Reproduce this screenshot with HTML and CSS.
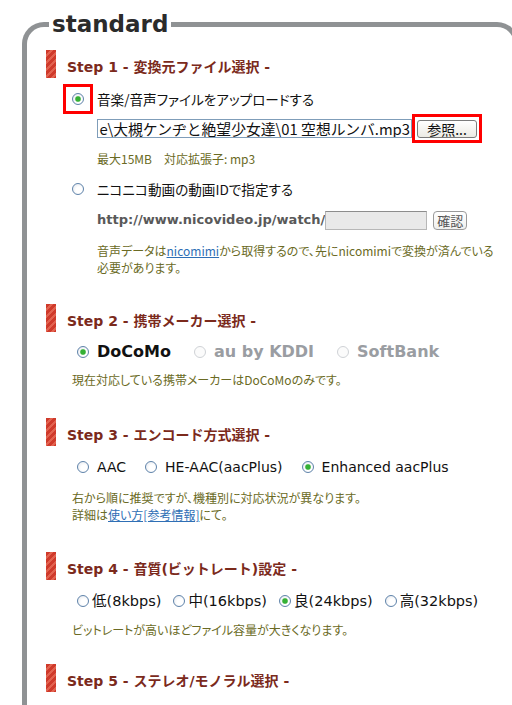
FILE: index.html
```html
<!DOCTYPE html>
<html lang="ja">
<head>
<meta charset="utf-8">
<title>standard</title>
<link rel="stylesheet" href="styles.css">
</head>
<body>
<fieldset class="frame">
  <legend class="frame-title">standard</legend>

  <section class="step step-1">
    <h2 class="step-title"><span class="step-text">Step 1 - 変換元ファイル選択 -</span></h2>
    <div class="row opt-upload">
      <span class="hl-box"><input class="radio" type="radio" name="src" checked></span>
      <label class="opt-label jp">音楽/音声ファイルをアップロードする</label>
    </div>
    <div class="row file-row">
      <div class="file-path"><span>e\大槻ケンヂと絶望少女達\01 空想ルンバ.mp3</span></div>
      <span class="hl-btn"><button class="browse-btn" type="button">参照...</button></span>
    </div>
    <p class="note sub-note">最大15MB　対応拡張子: mp3</p>
    <div class="row opt-nico">
      <input class="radio" type="radio" name="src">
      <label class="opt-label jp">ニコニコ動画の動画IDで指定する</label>
    </div>
    <div class="row url-row">
      <span class="url">http://www.nicovideo.jp/watch/</span>
      <span class="id-box"></span>
      <button class="confirm-btn" type="button">確認</button>
    </div>
    <p class="note sub-note nico-note">音声データは<a href="#">nicomimi</a>から取得するので、先にnicomimiで変換が済んでいる<br>必要があります。</p>
  </section>

  <section class="step step-2">
    <h2 class="step-title"><span class="step-text">Step 2 - 携帯メーカー選択 -</span></h2>
    <div class="row carriers">
      <input class="radio" type="radio" name="carrier" checked>
      <label class="carrier">DoCoMo</label>
      <input class="radio" type="radio" name="carrier" disabled>
      <label class="carrier off">au by KDDI</label>
      <input class="radio" type="radio" name="carrier" disabled>
      <label class="carrier off">SoftBank</label>
    </div>
    <p class="note">現在対応している携帯メーカーはDoCoMoのみです。</p>
  </section>

  <section class="step step-3">
    <h2 class="step-title"><span class="step-text">Step 3 - エンコード方式選択 -</span></h2>
    <div class="row codecs">
      <input class="radio" type="radio" name="codec">
      <label class="codec">AAC</label>
      <input class="radio" type="radio" name="codec">
      <label class="codec">HE-AAC(aacPlus)</label>
      <input class="radio" type="radio" name="codec" checked>
      <label class="codec">Enhanced aacPlus</label>
    </div>
    <p class="note">右から順に推奨ですが、機種別に対応状況が異なります。<br>詳細は<a href="#">使い方[参考情報]</a>にて。</p>
  </section>

  <section class="step step-4">
    <h2 class="step-title"><span class="step-text">Step 4 - 音質(ビットレート)設定 -</span></h2>
    <div class="row rates">
      <input class="radio" type="radio" name="rate">
      <label class="rate">低(8kbps)</label>
      <input class="radio" type="radio" name="rate">
      <label class="rate">中(16kbps)</label>
      <input class="radio" type="radio" name="rate" checked>
      <label class="rate">良(24kbps)</label>
      <input class="radio" type="radio" name="rate">
      <label class="rate">高(32kbps)</label>
    </div>
    <p class="note">ビットレートが高いほどファイル容量が大きくなります。</p>
  </section>

  <section class="step step-5">
    <h2 class="step-title"><span class="step-text">Step 5 - ステレオ/モノラル選択 -</span></h2>
  </section>
</fieldset>
</body>
</html>
```

FILE: styles.css
```css
html, body {
  margin: 0;
  padding: 0;
  background: #ffffff;
  overflow: hidden;
}

body {
  font-family: "DejaVu Sans", "Noto Sans CJK JP", sans-serif;
  color: #111;
}

.frame {
  margin: 10px 0 0 22px;
  padding: 0 0 60px 0;
  width: 497px;
  min-width: 0;
  min-height: 760px;
  box-sizing: border-box;
  border: 5px solid #8f9294;
  border-bottom: none;
  border-radius: 22px 22px 0 0;
}

.frame-title {
  margin-left: 22px;
  padding: 0 3px;
  font: bold 23px/29px "DejaVu Sans", sans-serif;
  color: #2b2b2b;
}

.step {
  padding-left: 19px;
}

.step-title {
  display: flex;
  align-items: center;
  height: 28px;
  margin: 0;
  font: bold 14px/18px "DejaVu Sans", "Noto Sans CJK JP", sans-serif;
  color: #7b2a1c;
}

.step-title::before {
  content: "";
  flex: none;
  width: 10px;
  height: 28px;
  margin-right: 11px;
  background: repeating-linear-gradient(135deg, #cf3a2b 0 3px, #e2624f 3px 5px);
}

.step-text {
  padding-top: 6px;
}

.step-1 { margin-top: 11px; }
.step-2 { margin-top: 28px; }
.step-3 { margin-top: 30px; }
.step-4 { margin-top: 29px; }
.step-5 { margin-top: 26px; }

.row {
  display: flex;
  align-items: center;
}

/* radio buttons, XP style */
.radio {
  appearance: none;
  -webkit-appearance: none;
  flex: none;
  width: 12px;
  height: 12px;
  margin: 0;
  border: 1px solid #5f83aa;
  border-radius: 50%;
  box-sizing: border-box;
  background: radial-gradient(circle at 60% 60%, #ffffff 0 35%, #dfe3ea 100%);
}

.radio:checked {
  background:
    radial-gradient(circle, #35b035 0 2.2px, #8fd48f 2.8px, transparent 3.4px),
    radial-gradient(circle at 60% 60%, #ffffff 0 35%, #dfe3ea 100%);
}

.radio:disabled {
  border-color: #cfd2d6;
  background: #fbfbfb;
}

/* step 1 */
.opt-upload {
  margin-top: 6px;
  height: 30px;
  padding-left: 17px;
}

.hl-box {
  display: flex;
  align-items: center;
  justify-content: center;
  width: 30px;
  height: 30px;
  box-sizing: border-box;
  border: 3px solid #ff0000;
}

.opt-label {
  margin-left: 4px;
  font-family: "Noto Sans CJK JP", sans-serif;
  font-size: 13.6px;
  font-feature-settings: "palt";
  color: #111;
}

.file-row {
  height: 29px;
  padding-left: 51px;
}

.file-path {
  display: flex;
  justify-content: flex-end;
  overflow: hidden;
  width: 315px;
  height: 19px;
  box-sizing: border-box;
  border: 1px solid #7f9db9;
  font: 14.8px/17px "Noto Sans CJK JP", sans-serif;
  color: #111;
  white-space: nowrap;
}

.file-path span {
  flex: none;
  padding-right: 1px;
}

.hl-btn {
  display: flex;
  align-items: center;
  box-sizing: border-box;
  height: 29px;
  padding: 0 2px;
  border: 3px solid #ff0000;
}

.browse-btn {
  width: 60px;
  height: 18px;
  padding: 0;
  border: 1px solid #7b7b7b;
  border-radius: 3px;
  background: linear-gradient(#ffffff, #ecebe4);
  font: 14px/16px "Noto Sans CJK JP", sans-serif;
  color: #111;
}

.note {
  margin: 0;
  padding-left: 26px;
  font-family: "Noto Sans CJK JP", sans-serif;
  font-size: 12px;
  font-feature-settings: "palt";
  line-height: 17px;
  color: #6a6a24;
}

.sub-note {
  padding-left: 51px;
}

.step-1 .note:first-of-type {
  margin-top: 7px;
}

.note a {
  color: #2f6fb5;
}

.opt-nico {
  margin-top: 12px;
  height: 20px;
  padding-left: 26px;
}

.opt-nico .opt-label {
  margin-left: 13px;
}

.url-row {
  margin-top: 11px;
  height: 20px;
  padding-left: 51px;
}

.url {
  font: bold 13px/20px "DejaVu Sans", sans-serif;
  color: #595959;
}

.id-box {
  width: 102px;
  height: 19px;
  box-sizing: border-box;
  border: 1px solid #b7b7b7;
  border-top-color: #8d8d8d;
  background: #e9e9e9;
}

.confirm-btn {
  margin-left: 6px;
  width: 34px;
  height: 19px;
  padding: 0;
  border: 1px solid #9a9a9a;
  border-radius: 4px;
  background: linear-gradient(#ffffff, #f0f0ee);
  font: 13px/15px "Noto Sans CJK JP", sans-serif;
  color: #555;
}

.nico-note {
  margin-top: 12px;
}

/* step 2 */
.carriers {
  margin-top: 9px;
  height: 22px;
  padding-left: 31px;
}

.carrier {
  margin-left: 8px;
  margin-right: 23px;
  font: bold 16px/22px "DejaVu Sans", sans-serif;
  color: #111;
}

.carrier.off {
  color: #9a9da2;
}

.step-2 .note {
  margin-top: 8px;
}

/* step 3 */
.codecs {
  margin-top: 11px;
  height: 20px;
  padding-left: 31px;
}

.codec {
  margin-left: 8px;
  margin-right: 19px;
  font: 14px/20px "DejaVu Sans", sans-serif;
  color: #111;
}

.step-3 .note {
  margin-top: 12px;
}

/* step 4 */
.rates {
  margin-top: 11px;
  height: 20px;
  padding-left: 31px;
}

.rate {
  margin-left: 3px;
  margin-right: 12px;
  font: 14.5px/20px "DejaVu Sans", "Noto Sans CJK JP", sans-serif;
  color: #111;
}

.step-4 .note {
  margin-top: 10px;
}
```
